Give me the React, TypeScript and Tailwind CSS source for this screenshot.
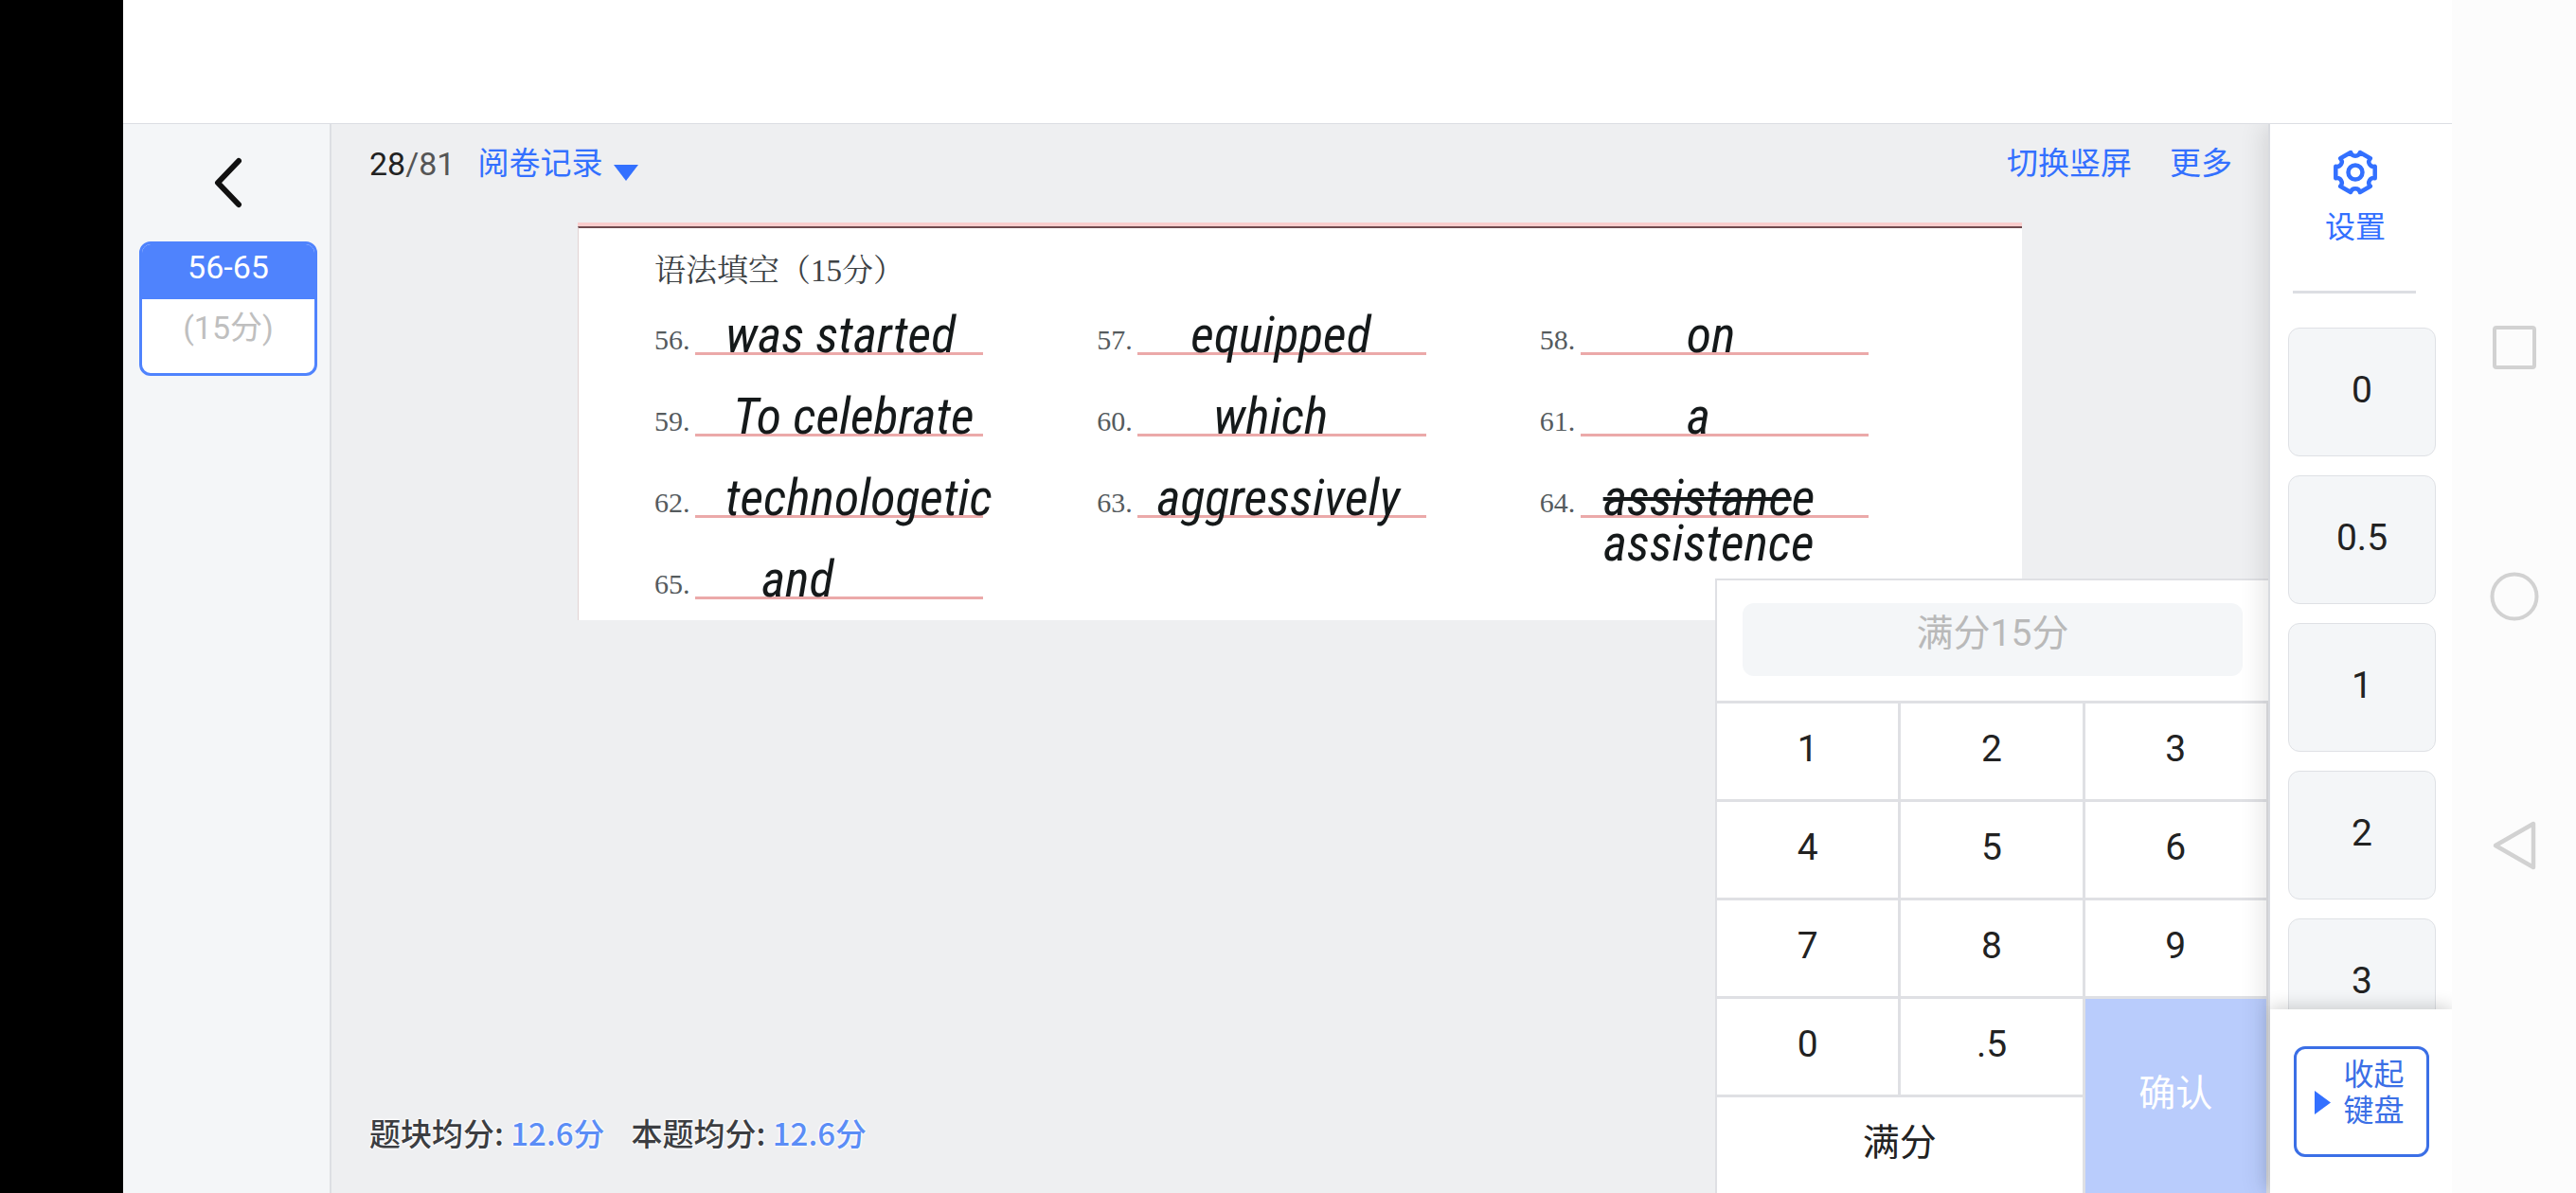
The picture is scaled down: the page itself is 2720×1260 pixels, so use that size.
import type { ReactNode } from 'react'

type Answer = {
  no: number
  text: ReactNode
  pad: string
  below?: string
}

const answers: Answer[] = [
  { no: 56, text: 'was started', pad: 'pl-8' },
  { no: 57, text: 'equipped', pad: 'pl-14' },
  { no: 58, text: 'on', pad: 'pl-28' },
  { no: 59, text: 'To celebrate', pad: 'pl-10' },
  { no: 60, text: 'which', pad: 'pl-20' },
  { no: 61, text: 'a', pad: 'pl-28' },
  { no: 62, text: 'technologetic', pad: 'pl-8' },
  { no: 63, text: 'aggressively', pad: 'pl-5' },
  {
    no: 64,
    text: (
      <>
        <s className="decoration-[4px]">assistanc</s>e
      </>
    ),
    pad: 'pl-6',
    below: 'assistence',
  },
  { no: 65, text: 'and', pad: 'pl-[70px]' },
]

const keys = ['1', '2', '3', '4', '5', '6', '7', '8', '9', '0', '.5']
const scores = ['0', '0.5', '1', '2', '3']

const gear =
  'M19.1 3C20.5 8 27.5 8 28.9 3L39.8 9.3C36.1 13 39.6 19 44.7 17.7V30.3C39.6 29 36.1 35 39.8 38.7L28.9 45C27.5 40 20.5 40 19.1 45L8.2 38.7C11.9 35 8.4 29 3.3 30.3V17.7C8.4 19 11.9 13 8.2 9.3Z'

function Sidebar() {
  return (
    <aside className="flex w-[220px] shrink-0 flex-col items-center border-r-2 border-[#dddfe3] bg-[#f4f6f8] pl-1">
      <button aria-label="返回" className="mt-[35px] p-0">
        <svg width="30" height="54" viewBox="0 0 30 54" fill="none" stroke="#111" strokeWidth="6" strokeLinecap="round" strokeLinejoin="round">
          <path d="M26 4 4 27l22 23" />
        </svg>
      </button>
      <button className="mt-[35px] flex h-[142px] w-[188px] flex-col overflow-hidden rounded-xl border-[3px] border-[#4f83fd] bg-white text-[34px]">
        <span className="h-[58px] w-full bg-[#4f83fd] leading-[48px] text-white">56-65</span>
        <span className="w-full leading-[60px] text-[#bfbfbf]">(15分)</span>
      </button>
    </aside>
  )
}

function Paper() {
  return (
    <div className="border-t-[4px] border-[#f9cccc] bg-white">
      <div className="border-t-2 border-l border-t-[#6e4a4e] border-l-[#e2d3d3] pr-[162px] pb-[22px] pl-20 font-['Liberation_Serif','Noto_Serif_CJK_SC',serif]">
        <h1 className="pt-[22px] text-[33px] leading-[46px] text-[#3d4245]">语法填空（15分）</h1>
        <ol className="grid auto-rows-[66px] grid-cols-3 gap-x-[120px] gap-y-5">
          {answers.map((a) => (
            <li key={a.no} className="flex">
              <span className="w-[43px] shrink-0 pt-[30px] text-[30px] leading-10 text-[#555b5e]">{a.no}.</span>
              <div
                className={`relative h-[66px] min-w-0 flex-1 border-b-[3px] border-[#eba9a9] font-['Roboto_Condensed','Roboto',sans-serif] text-[54px] leading-[90px] whitespace-nowrap text-[#15191a] italic ${a.pad}`}
              >
                {a.text}
                {a.below && <span className="absolute top-12 left-6">{a.below}</span>}
              </div>
            </li>
          ))}
        </ol>
      </div>
    </div>
  )
}

function Keypad() {
  return (
    <section className="absolute right-0 bottom-0 w-[584px] border-t-2 border-l-2 border-[#dfe0e4] bg-white text-[39px] text-[#222]">
      <div className="px-[27px] pt-6 pb-[26px]">
        <input
          aria-label="得分"
          placeholder="满分15分"
          className="block h-[77px] w-full rounded-xl bg-[#f4f6f8] pb-3.5 text-center placeholder:text-[#b9b9b9]"
        />
      </div>
      <div className="grid auto-rows-[101px] grid-cols-3 gap-[3px] border-t-[3px] border-r-2 border-[#dfe0e4] bg-[#dfe0e4]">
        {keys.map((k) => (
          <button key={k} className="bg-white pb-1">
            {k}
          </button>
        ))}
        <button className="col-start-3 row-span-2 row-start-4 bg-[#b9ccfc] pb-1 text-white">确认</button>
        <button className="col-span-2 bg-white pb-1">满分</button>
      </div>
    </section>
  )
}

function Workspace() {
  return (
    <main className="relative flex min-w-0 flex-1 flex-col bg-[#eeeff1]">
      <header className="flex h-[104px] items-start pt-[18px] pr-[38px] pl-10 text-[33px] leading-[48px] text-[#3370ff]">
        <span className="text-[34px] text-[#555]">
          <span className="text-[#222]">28</span>/81
        </span>
        <button className="ml-6 flex items-center gap-3">
          阅卷记录
          <svg width="26" height="17" viewBox="0 0 26 17" fill="currentColor" className="mt-[18px]">
            <path d="M0 0h26L13 17z" />
          </svg>
        </button>
        <button className="ml-auto">切换竖屏</button>
        <button className="ml-10">更多</button>
      </header>
      <div className="px-[260px]">
        <Paper />
      </div>
      <footer className="mt-auto flex gap-7 px-10 pb-10 font-['Noto_Sans_CJK_SC',sans-serif] text-[33px] leading-[48px] font-medium text-[#3c3e42] [text-shadow:0_0_3px_#fff,0_0_3px_#fff,0_0_3px_#fff]">
        <p>
          题块均分: <span className="text-[#5b8df6]">12.6分</span>
        </p>
        <p>
          本题均分: <span className="text-[#5b8df6]">12.6分</span>
        </p>
      </footer>
      <Keypad />
    </main>
  )
}

function ScorePanel() {
  return (
    <aside className="relative flex w-[194px] shrink-0 flex-col border-l-2 border-[#d9dbe0] bg-white shadow-[-6px_0_24px_rgba(0,0,0,0.10)]">
      <button className="flex flex-col items-center pt-[27px] pr-3 text-[32px] leading-[44px] text-[#3370ff]">
        <svg width="48" height="48" viewBox="0 0 48 48" fill="none" stroke="currentColor" strokeWidth="4.5" strokeLinejoin="round">
          <path d={gear} />
          <circle cx="24" cy="24" r="7.5" />
        </svg>
        <span className="pt-3">设置</span>
      </button>
      <hr className="mt-[45px] ml-6 w-[130px] border-t-[3px] border-[#dcdee3]" />
      <div className="mt-9 flex min-h-0 flex-1 flex-col gap-5 overflow-hidden pr-[17px] pl-[19px]">
        {scores.map((s) => (
          <button key={s} className="h-[136px] shrink-0 rounded-xl border border-[#dfe1e5] bg-[#f4f6f8] pb-1 text-[39px] text-[#222]">
            {s}
          </button>
        ))}
      </div>
      <div className="relative flex h-[194px] shrink-0 items-start justify-center bg-white pt-[39px] shadow-[0_-4px_16px_rgba(0,0,0,0.16)]">
        <button className="flex h-[117px] w-[143px] justify-center gap-3.5 rounded-xl border-[3px] border-[#3b6fe6] pt-2 pr-1 text-[32px] leading-[38px] text-[#3b6fe6]">
          <svg width="17" height="25" viewBox="0 0 17 25" fill="#3370ff" className="mt-9">
            <path d="M0 0v25l17-12.5z" />
          </svg>
          <span className="w-16">收起键盘</span>
        </button>
      </div>
    </aside>
  )
}

function SystemNav() {
  return (
    <nav className="flex w-[131px] shrink-0 flex-col items-center justify-center gap-[209px] bg-[#fcfcfc]">
      <button aria-label="最近任务">
        <svg width="54" height="54" viewBox="0 0 54 54" fill="none" stroke="#d2d2d2" strokeWidth="4">
          <rect x="6" y="6" width="42" height="42" rx="2" />
        </svg>
      </button>
      <button aria-label="主屏幕">
        <svg width="54" height="54" viewBox="0 0 54 54" fill="none" stroke="#d2d2d2" strokeWidth="4">
          <circle cx="27" cy="27" r="23.5" />
        </svg>
      </button>
      <button aria-label="后退">
        <svg width="54" height="54" viewBox="0 0 54 54" fill="none" stroke="#d2d2d2" strokeWidth="4.5" strokeLinejoin="round">
          <path d="M47 4v46L7 27z" />
        </svg>
      </button>
    </nav>
  )
}

export default function App() {
  return (
    <div className="flex h-screen bg-white font-[Roboto,'Noto_Sans_CJK_SC',sans-serif]">
      <div className="w-[130px] shrink-0 bg-black" />
      <div className="flex min-w-0 flex-1 flex-col">
        <div className="h-[131px] shrink-0 border-b border-[#dcdee3]" />
        <div className="flex min-h-0 flex-1 overflow-hidden">
          <Sidebar />
          <Workspace />
          <ScorePanel />
        </div>
      </div>
      <SystemNav />
    </div>
  )
}
